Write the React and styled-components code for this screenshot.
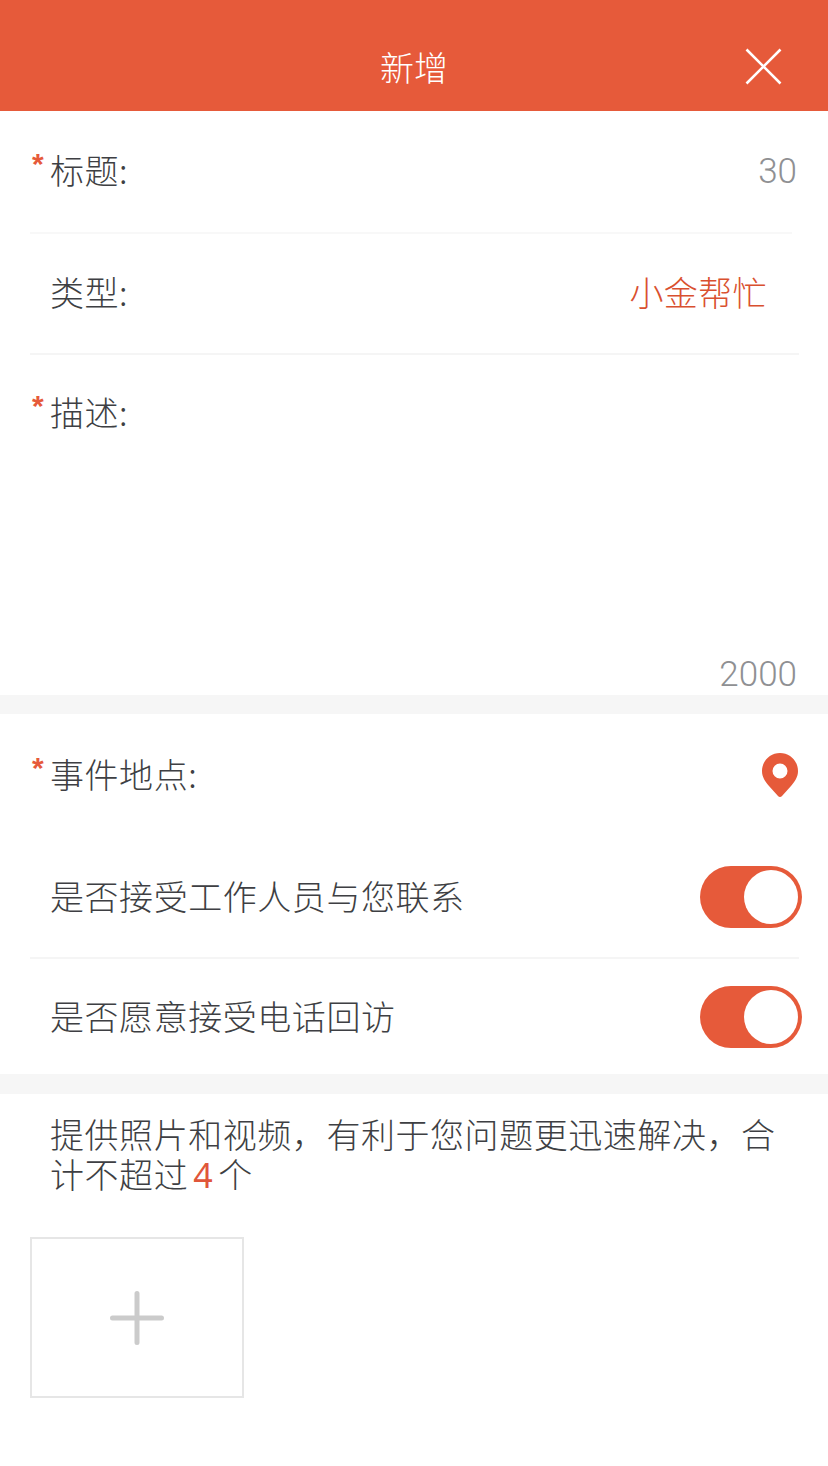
import React from 'react';
import styled, { createGlobalStyle } from 'styled-components';

const GlobalStyle = createGlobalStyle`
  html, body {
    margin: 0;
    padding: 0;
    background: #fff;
  }
  body {
    font-family: "Noto Sans CJK SC", "Noto Sans", sans-serif;
    font-weight: 300;
  }
`;

const Page = styled.div`
  width: 828px;
  height: 1466px;
  overflow: hidden;
  background: #fff;
  color: #3e3f43;
`;

const Header = styled.header`
  height: 111px;
  box-sizing: border-box;
  padding: 22px 46px 0;
  background: #e65a3a;
  display: grid;
  grid-template-columns: 1fr auto 1fr;
  align-items: center;
  color: #fff;
  font-size: 34px;
`;

const CloseBtn = styled.svg`
  grid-column: 3;
  justify-self: end;
  width: 37px;
  height: 37px;
`;

const Title = styled.span`
  grid-column: 2;
`;

const Row = styled.div`
  height: ${(p) => p.$h}px;
  box-sizing: border-box;
  margin: 0 ${(p) => p.$right}px 0 30px;
  display: flex;
  align-items: center;
  justify-content: space-between;
  border-bottom: ${(p) => (p.$line ? `2px solid ${p.$line}` : 'none')};
`;

const LabelGroup = styled.div`
  display: flex;
  align-items: flex-start;
  margin-bottom: ${(p) => p.$lift || 2}px;
`;

const Mark = styled.span`
  width: 20px;
  box-sizing: border-box;
  padding-left: 2px;
  margin-top: -3px;
  color: #e65a3a;
  font-size: 30px;
  font-weight: 700;
  font-family: "Liberation Sans", sans-serif;
`;

const LabelText = styled.span`
  font-size: 34px;
  line-height: 40px;
  letter-spacing: 0.55px;
`;

const Counter = styled.span`
  font-family: Roboto, sans-serif;
  font-weight: 300;
  font-size: 35px;
  line-height: 40px;
  color: #8f9093;
  margin-right: ${(p) => p.$shift || 0}px;
`;

const TypeValue = styled.span`
  font-size: 34px;
  line-height: 40px;
  color: #d9502f;
  letter-spacing: 0.4px;
  margin: 0 32px 4px 0;
`;

const DescBlock = styled.div`
  height: 340px;
  box-sizing: border-box;
  padding: 37px 31px 0 30px;
  display: flex;
  flex-direction: column;
  justify-content: space-between;
  align-items: flex-start;
`;

const DescCounter = styled(Counter)`
  align-self: flex-end;
`;

const Gap = styled.div`
  height: ${(p) => p.$h}px;
  background: #f6f6f6;
`;

const Switch = styled.div`
  width: 102px;
  height: 62px;
  box-sizing: border-box;
  padding: 4px;
  border-radius: 31px;
  background: #e65a3a;
  display: flex;
  justify-content: flex-end;
  margin-right: -3px;
  &::after {
    content: '';
    width: 54px;
    height: 54px;
    border-radius: 50%;
    background: #fff;
  }
`;

const PinBox = styled.span`
  display: flex;
  margin-right: 1px;
`;

const Notice = styled.p`
  margin: 0;
  padding: 20px 48px 0 50px;
  font-size: 34px;
  line-height: 40px;
  letter-spacing: 0.55px;
`;

const Count = styled.span`
  font-family: "Noto Sans", sans-serif;
  font-weight: 400;
  color: #e0563a;
  margin: 0 5px;
`;

const Upload = styled.div`
  width: 214px;
  height: 161px;
  box-sizing: border-box;
  margin: 42px 0 0 30px;
  border: 2px solid #e6e6e6;
  display: flex;
  align-items: center;
  justify-content: center;
`;

const Pin = () => (
  <svg width="36" height="44" viewBox="0 0 36 44">
    <path
      fillRule="evenodd"
      fill="#e65a3a"
      d="M18 0C8 0 0 8 0 18c0 6 3 10 7 15l9 10c1 1.300 3 1.300 4 0l9-10c4-5 7-9 7-15C36 8 28 0 18 0zm0 10.500a7.500 7.500 0 1 1 0 15 7.500 7.500 0 0 1 0-15z"
    />
  </svg>
);

const Label = ({ required, lift, children }) => (
  <LabelGroup $lift={lift}>
    <Mark>{required ? '*' : ''}</Mark>
    <LabelText>{children}</LabelText>
  </LabelGroup>
);

export default function App() {
  return (
    <Page>
      <GlobalStyle />
      <Header>
        <Title>新增</Title>
        <CloseBtn viewBox="0 0 37 37">
          <path d="M1.500 1.500L35.500 35.500M35.500 1.500L1.500 35.500" stroke="#fff" strokeWidth="2.600" fill="none" />
        </CloseBtn>
      </Header>

      <Row $h={123} $right={36} $line="#f8f8f8">
        <Label required lift={4}>标题:</Label>
        <Counter $shift={-5}>30</Counter>
      </Row>
      <Row $h={121} $right={29} $line="#f5f5f5">
        <Label lift={4}>类型:</Label>
        <TypeValue>小金帮忙</TypeValue>
      </Row>
      <DescBlock>
        <Label required>描述:</Label>
        <DescCounter>2000</DescCounter>
      </DescBlock>
      <Gap $h={19} />

      <Row $h={122} $right={29}>
        <Label required>事件地点:</Label>
        <PinBox><Pin /></PinBox>
      </Row>
      <Row $h={123} $right={29} $line="#f5f5f5">
        <Label>是否接受工作人员与您联系</Label>
        <Switch />
      </Row>
      <Row $h={115} $right={29}>
        <Label>是否愿意接受电话回访</Label>
        <Switch />
      </Row>
      <Gap $h={20} />

      <Notice>
        提供照片和视频，有利于您问题更迅速解决，合
        <br />
        计不超过<Count>4</Count>个
      </Notice>
      <Upload>
        <svg width="54" height="54" viewBox="0 0 54 54">
          <path d="M2.500 27H51.500M27 2.500V51.500" stroke="#cbcbcb" strokeWidth="5" strokeLinecap="round" fill="none" />
        </svg>
      </Upload>
    </Page>
  );
}
